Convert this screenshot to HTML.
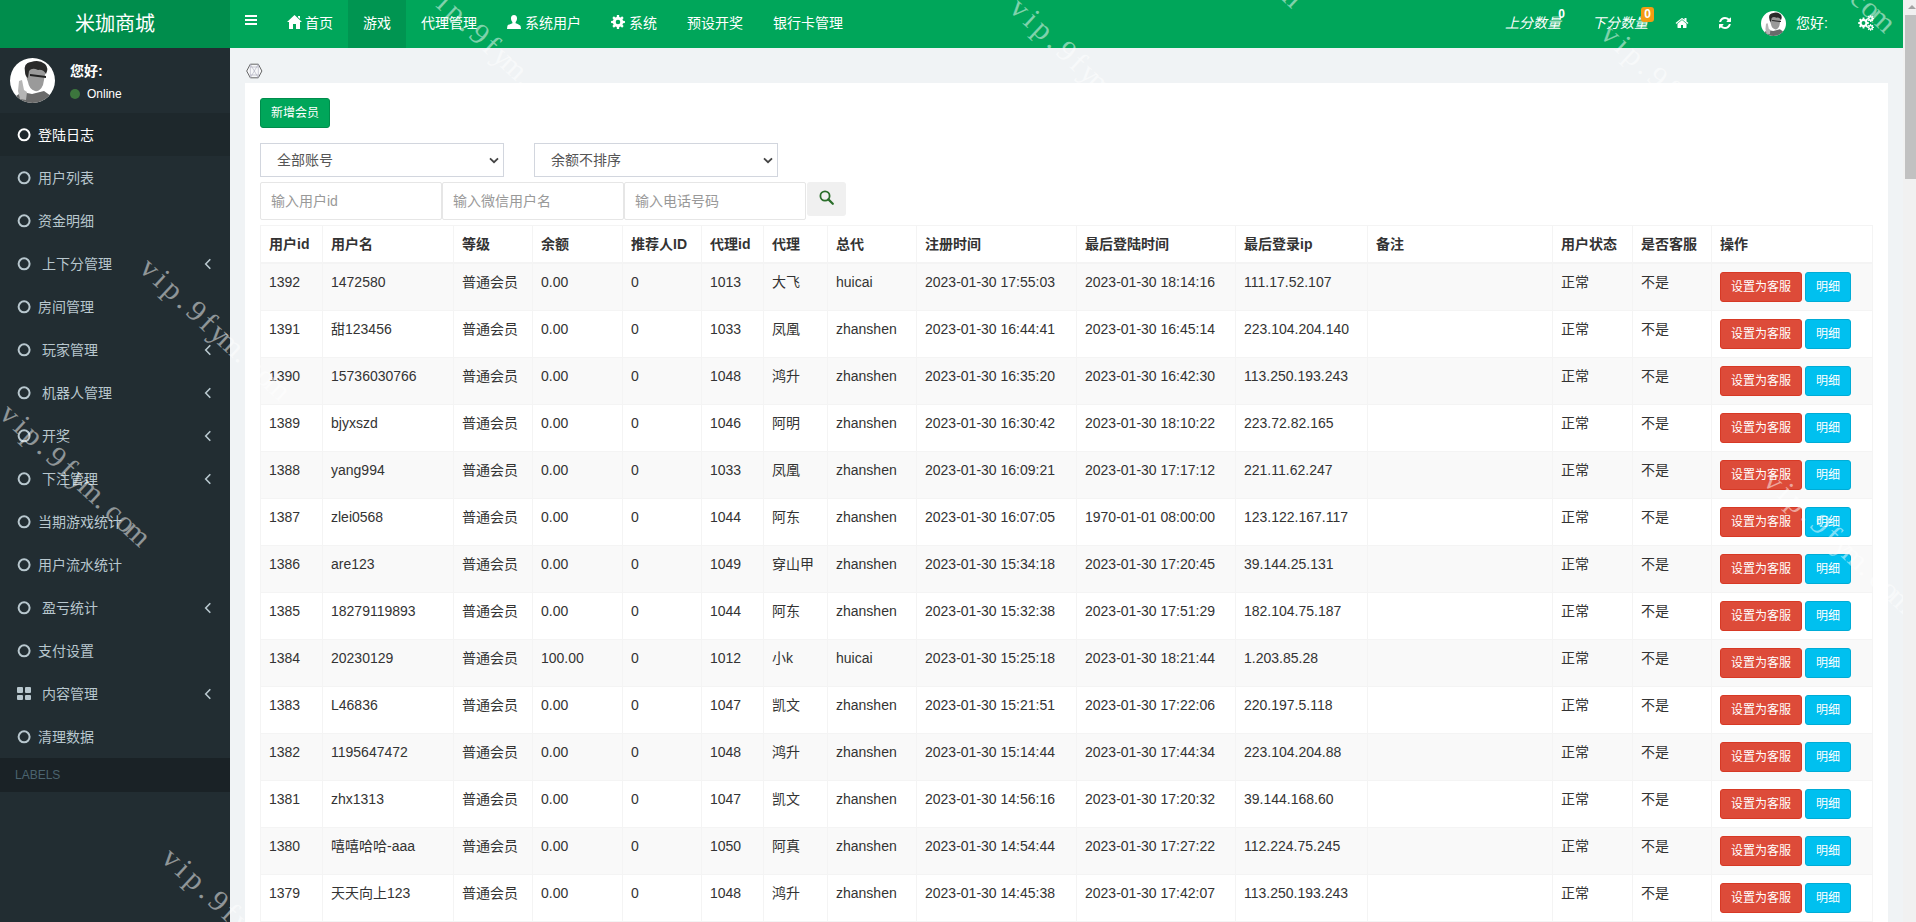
<!DOCTYPE html>
<html lang="zh-CN"><head><meta charset="utf-8"><title>米珈商城</title>
<style>
*{box-sizing:border-box}
html,body{margin:0;padding:0}
body{width:1916px;height:922px;overflow:hidden;position:relative;background:#f0f3f5;font-family:"Liberation Sans","Noto Sans CJK SC",sans-serif;font-size:14px;line-height:20px;color:#333}
ul{list-style:none;margin:0;padding:0}
#logo{position:absolute;left:0;top:0;width:230px;height:48px;background:#008d4c;color:#fff;font-size:20px;line-height:48px;text-align:center}
#nav{position:absolute;left:230px;top:0;width:1673px;height:48px;background:#00a65a;color:#fff}
#nav .tg{position:absolute;left:15px;top:15px;width:12px;height:10px;border-top:2px solid #fff;border-bottom:2px solid #fff}
#nav .tg:after{content:"";position:absolute;left:0;top:2px;width:12px;height:2px;background:#fff}
#nav .l{position:absolute;left:42px;top:0;height:48px;display:flex}
#nav .l li{height:48px;line-height:46px;padding:0 15px;white-space:nowrap;position:relative}
#nav .l li.on{background:#009551}
#nav .l li svg{vertical-align:-1px;margin-right:3px}
#nav .r{position:absolute;left:0;top:0;height:48px;width:100%}
.bdg{font-size:12px;font-weight:bold;line-height:11px;padding:2px 3px;border-radius:3px;width:13px;height:15px;text-align:center}
#nav .r > *{position:absolute}
#nav em{font-style:italic;line-height:46px;white-space:nowrap}
#side{position:absolute;left:0;top:48px;width:230px;height:874px;background:#222d32}
#side .AV{position:absolute;left:10px;top:10px;width:45px;height:45px}
#side .hi{position:absolute;left:70px;top:13px;color:#fff;font-weight:bold;font-size:14px;line-height:20px}
#side .on{position:absolute;left:70px;top:38px;color:#fff;font-size:12px;line-height:16px}
#side .on i{display:inline-block;width:10px;height:10px;border-radius:50%;background:#3c763d;margin-right:7px;vertical-align:-1px}
#menu{position:absolute;left:0;top:65px;width:230px}
#menu li{height:43px;line-height:44px;color:#b8c7ce;position:relative;padding-left:38px;white-space:nowrap}
#menu li.act{background:#1e282c;color:#fff}
#menu li .co{position:absolute;left:17px;top:15px;stroke:#b8c7ce}
#menu li.act .co{stroke:#fff}
#menu li .tv{margin-left:4px}
#menu li .ang{position:absolute;left:204px;top:16px}
#menu li .th{position:absolute;left:17px;top:15px;width:14px;height:13px}
#menu li .th b{position:absolute;width:6px;height:5.5px;background:#b8c7ce;border-radius:1px}
#menu li .th b:nth-child(2){left:8px}#menu li .th b:nth-child(3){top:7.5px}#menu li .th b:nth-child(4){left:8px;top:7.5px}
#lab{position:absolute;left:0;top:710px;width:230px;height:34px;background:#1a2226;color:#4b646f;font-size:12px;line-height:34px;padding-left:15px}
#box{position:absolute;left:245px;top:83px;width:1643px;height:860px;background:#fff}
.btn{display:inline-block;height:30px;line-height:28px;padding:0 10px;font-size:12px;color:#fff;border:1px solid;border-radius:3px;white-space:nowrap}
.bs{background:#00a65a;border-color:#008d4c;position:absolute;left:15px;top:15px}
.bd{background:#dd4b39;border-color:#d73925}
.bi{background:#00c0ef;border-color:#00acd6;margin-left:3px}
.sel{position:absolute;top:60px;width:244px;height:34px;border:1px solid #d2d6de;color:#555;line-height:32px;padding-left:16px}
.sel svg{position:absolute;left:227px;top:12px}
.inp{position:absolute;top:99px;width:182px;height:38px;border:1px solid #e6e6e6;border-radius:2px;color:#999;line-height:36px;padding-left:10px}
.sb{position:absolute;left:562px;top:99px;width:39px;height:34px;background:#f0f0f0;border-radius:3px}
.sb svg{position:absolute;left:12px;top:8px}
table{position:absolute;left:15px;top:142px;width:1612px;border-collapse:collapse;table-layout:fixed}
th,td{border:1px solid #f4f4f4;padding:8px;text-align:left;vertical-align:top;line-height:20px;white-space:nowrap;overflow:hidden}
th{font-weight:bold;height:37px;border-bottom:2px solid #f4f4f4}
td{height:47px}
tbody tr:nth-child(odd){background:#f9f9f9}
td.op{padding-top:8px;padding-bottom:0;font-size:0}
#sbar{position:absolute;left:1903px;top:0;width:13px;height:922px;background:#f1f1f1}
#sbar i{position:absolute;left:2px;top:15px;width:11px;height:164px;background:#c1c1c1}
#sbar:before{content:"";position:absolute;left:4.5px;top:5px;border:4px solid transparent;border-bottom:4px solid #a3a3a3;border-top:0}
.wm{position:absolute;overflow:visible;pointer-events:none}
.wm text{text-anchor:middle;font-family:"Liberation Serif",serif;font-size:30px;fill:#fff;fill-opacity:.5}
.hex{position:absolute;left:246px;top:63px}
</style></head><body>
<div id="logo">米珈商城</div>
<div id="nav"><span class="tg"></span>
<ul class="l">
<li><svg width="15" height="14" viewBox="0 0 15 14"><path d="M7.5 0 L15 7 L13 7 L13 14 L9 14 L9 9 L6 9 L6 14 L2 14 L2 7 L0 7Z M11 1 L13 1 L13 4 L11 2.2Z" fill="#fff"/></svg>首页</li>
<li class="on">游戏</li>
<li>代理管理</li>
<li><svg style="margin-right:4px" width="14" height="14" viewBox="0 0 14 14"><path d="M7 0 C9.2 0 10.2 1.7 10 3.8 C9.8 5.6 9 6.6 8.6 7.2 L8.6 8.2 C10.5 9 13 9.6 13.6 11 L14 14 L0 14 L0.4 11 C1 9.6 3.5 9 5.4 8.2 L5.4 7.2 C5 6.6 4.2 5.6 4 3.8 C3.8 1.7 4.8 0 7 0Z" fill="#fff"/></svg>系统用户</li>
<li><svg style="margin-right:4px" width="14" height="14" viewBox="0 0 14 14"><path fill-rule="evenodd" d="M13.91 5.90 L13.91 8.10 L12.04 8.26 L11.46 9.67 L12.66 11.11 L11.11 12.66 L9.67 11.46 L8.26 12.04 L8.10 13.91 L5.90 13.91 L5.74 12.04 L4.33 11.46 L2.89 12.66 L1.34 11.11 L2.54 9.67 L1.96 8.26 L0.09 8.10 L0.09 5.90 L1.96 5.74 L2.54 4.33 L1.34 2.89 L2.89 1.34 L4.33 2.54 L5.74 1.96 L5.90 0.09 L8.10 0.09 L8.26 1.96 L9.67 2.54 L11.11 1.34 L12.66 2.89 L11.46 4.33 L12.04 5.74Z M9.30 7.00 A2.3 2.3 0 1 0 4.70 7.00 A2.3 2.3 0 1 0 9.30 7.00Z" fill="#fff"/></svg>系统</li>
<li>预设开奖</li>
<li>银行卡管理</li>
</ul>
<div class="r">
<em style="left:1275px;top:0">上分数量</em><b class="bdg" style="left:1325px;top:7px">0</b>
<em style="left:1362px;top:0">下分数量</em><b class="bdg" style="left:1411px;top:7px;background:#f39c12">0</b>
<svg style="left:1445.3px;top:16px" width="14" height="14" viewBox="0 0 1792 1792"><path fill="#fff" d="M1472 992v480q0 26-19 45t-45 19h-384v-384h-256v384h-384q-26 0-45-19t-19-45v-480q0-1 .5-3t.5-3l575-474 575 474q1 2 1 6zm223-69l-62 74q-8 9-21 11h-3q-13 0-21-7l-692-577-692 577q-12 8-24 7-13-2-21-11l-62-74q-8-10-7-23.500t11-21.500l719-599q32-26 76-26t76 26l244 204v-195q0-14 9-23t23-9h192q14 0 23 9t9 23v408l219 182q10 8 11 21.500t-7 23.500z"/></svg>
<svg style="left:1488px;top:16px" width="14" height="14" viewBox="0 0 1792 1792"><path fill="#fff" d="M1639 1056q0 5-1 7-64 268-268 434.500t-478 166.500q-146 0-282.500-55t-243.500-157l-129 129q-19 19-45 19t-45-19-19-45v-448q0-26 19-45t45-19h448q26 0 45 19t19 45-19 45l-137 137q71 66 161 102t187 36q134 0 250-65t186-179q11-17 53-117 8-23 30-23h192q13 0 22.500 9.500t9.500 22.500zm25-800v448q0 26-19 45t-45 19h-448q-26 0-45-19t-19-45 19-45l138-138q-148-137-349-137-134 0-250 65t-186 179q-11 17-53 117-8 23-30 23h-199q-13 0-22.500-9.500t-9.500-22.500v-7q65-268 270-434.500t480-166.500q146 0 284 55.500t245 156.500l130-129q19-19 45-19t45 19 19 45z"/></svg>
<svg style="left:1531px;top:11px" width="25" height="25" viewBox="0 0 45 45"><defs><clipPath id="c2"><circle cx="22.5" cy="22.5" r="22.5"/></clipPath></defs><g clip-path="url(#c2)"><rect width="45" height="45" fill="#fff"/><path d="M3 40 L12 34 L22 36 L34 33 L41 38 L45 45 L0 45Z" fill="#6b6b6b"/><path d="M17 10 Q15 4 22 4 Q30 2 34 7 Q38 11 35 17 L33 27 Q30 34 25 33 Q19 31 18 24 Q15 17 17 10Z" fill="#9a9a9a"/><path d="M15 14 Q13 5 21 4 Q29 1 35 6 Q39 10 36 16 Q33 11 28 12 Q22 9 19 13 L18 20 Q15 18 15 14Z" fill="#2a2a2a"/><path d="M20 16 L36 18 L36 20 L20 18Z" fill="#222"/><path d="M9 23 L12 22 L14 32 L17 34 L16 42 L10 41 L8 33Z" fill="#b5b5b5"/></g></svg>
<span style="left:1566px;top:0;line-height:46px;white-space:nowrap">您好:</span>
<svg style="left:1627.5px;top:15px" width="16" height="16" viewBox="0 0 16 16"><path fill-rule="evenodd" fill="#fff" d="M10.93 7.14 L10.93 8.86 L9.48 9.00 L9.02 10.11 L9.95 11.23 L8.73 12.45 L7.61 11.52 L6.50 11.98 L6.36 13.43 L4.64 13.43 L4.50 11.98 L3.39 11.52 L2.27 12.45 L1.05 11.23 L1.98 10.11 L1.52 9.00 L0.07 8.86 L0.07 7.14 L1.52 7.00 L1.98 5.89 L1.05 4.77 L2.27 3.55 L3.39 4.48 L4.50 4.02 L4.64 2.57 L6.36 2.57 L6.50 4.02 L7.61 4.48 L8.73 3.55 L9.95 4.77 L9.02 5.89 L9.48 7.00Z M7.40 8.00 A1.9 1.9 0 1 0 3.60 8.00 A1.9 1.9 0 1 0 7.40 8.00Z M15.96 3.07 L15.96 4.13 L15.03 4.21 L14.74 4.89 L15.35 5.60 L14.60 6.35 L13.89 5.74 L13.21 6.03 L13.13 6.96 L12.07 6.96 L11.99 6.03 L11.31 5.74 L10.60 6.35 L9.85 5.60 L10.46 4.89 L10.17 4.21 L9.24 4.13 L9.24 3.07 L10.17 2.99 L10.46 2.31 L9.85 1.60 L10.60 0.85 L11.31 1.46 L11.99 1.17 L12.07 0.24 L13.13 0.24 L13.21 1.17 L13.89 1.46 L14.60 0.85 L15.35 1.60 L14.74 2.31 L15.03 2.99Z M13.70 3.60 A1.1 1.1 0 1 0 11.50 3.60 A1.1 1.1 0 1 0 13.70 3.60Z M15.96 11.87 L15.96 12.93 L15.03 13.01 L14.74 13.69 L15.35 14.40 L14.60 15.15 L13.89 14.54 L13.21 14.83 L13.13 15.76 L12.07 15.76 L11.99 14.83 L11.31 14.54 L10.60 15.15 L9.85 14.40 L10.46 13.69 L10.17 13.01 L9.24 12.93 L9.24 11.87 L10.17 11.79 L10.46 11.11 L9.85 10.40 L10.60 9.65 L11.31 10.26 L11.99 9.97 L12.07 9.04 L13.13 9.04 L13.21 9.97 L13.89 10.26 L14.60 9.65 L15.35 10.40 L14.74 11.11 L15.03 11.79Z M13.70 12.40 A1.1 1.1 0 1 0 11.50 12.40 A1.1 1.1 0 1 0 13.70 12.40Z"/></svg>
</div>
</div>
<div id="side">
<svg class="AV" viewBox="0 0 45 45"><defs><clipPath id="c1"><circle cx="22.5" cy="22.5" r="22.5"/></clipPath></defs><g clip-path="url(#c1)"><rect width="45" height="45" fill="#fff"/><path d="M3 40 L12 34 L22 36 L34 33 L41 38 L45 45 L0 45Z" fill="#6b6b6b"/><path d="M17 10 Q15 4 22 4 Q30 2 34 7 Q38 11 35 17 L33 27 Q30 34 25 33 Q19 31 18 24 Q15 17 17 10Z" fill="#9a9a9a"/><path d="M15 14 Q13 5 21 4 Q29 1 35 6 Q39 10 36 16 Q33 11 28 12 Q22 9 19 13 L18 20 Q15 18 15 14Z" fill="#2a2a2a"/><path d="M20 16 L36 18 L36 20 L20 18Z" fill="#222"/><path d="M9 23 L12 22 L14 32 L17 34 L16 42 L10 41 L8 33Z" fill="#b5b5b5"/></g></svg>
<div class="hi">您好:</div>
<div class="on"><i></i>Online</div>
<ul id="menu">
<li class="act"><svg class="co" width="14" height="14"><circle cx="7.1" cy="6.85" r="5.5" fill="none" stroke-width="2"/></svg><span>登陆日志</span></li>
<li><svg class="co" width="14" height="14"><circle cx="7.1" cy="6.85" r="5.5" fill="none" stroke-width="2"/></svg><span>用户列表</span></li>
<li><svg class="co" width="14" height="14"><circle cx="7.1" cy="6.85" r="5.5" fill="none" stroke-width="2"/></svg><span>资金明细</span></li>
<li><svg class="co" width="14" height="14"><circle cx="7.1" cy="6.85" r="5.5" fill="none" stroke-width="2"/></svg><span class="tv">上下分管理</span><svg class="ang" width="8" height="12" viewBox="0 0 8 12"><path d="M6.3 1.2 L1.7 6 L6.3 10.8" fill="none" stroke="#b8c7ce" stroke-width="1.6"/></svg></li>
<li><svg class="co" width="14" height="14"><circle cx="7.1" cy="6.85" r="5.5" fill="none" stroke-width="2"/></svg><span>房间管理</span></li>
<li><svg class="co" width="14" height="14"><circle cx="7.1" cy="6.85" r="5.5" fill="none" stroke-width="2"/></svg><span class="tv">玩家管理</span><svg class="ang" width="8" height="12" viewBox="0 0 8 12"><path d="M6.3 1.2 L1.7 6 L6.3 10.8" fill="none" stroke="#b8c7ce" stroke-width="1.6"/></svg></li>
<li><svg class="co" width="14" height="14"><circle cx="7.1" cy="6.85" r="5.5" fill="none" stroke-width="2"/></svg><span class="tv">机器人管理</span><svg class="ang" width="8" height="12" viewBox="0 0 8 12"><path d="M6.3 1.2 L1.7 6 L6.3 10.8" fill="none" stroke="#b8c7ce" stroke-width="1.6"/></svg></li>
<li><svg class="co" width="14" height="14"><circle cx="7.1" cy="6.85" r="5.5" fill="none" stroke-width="2"/></svg><span class="tv">开奖</span><svg class="ang" width="8" height="12" viewBox="0 0 8 12"><path d="M6.3 1.2 L1.7 6 L6.3 10.8" fill="none" stroke="#b8c7ce" stroke-width="1.6"/></svg></li>
<li><svg class="co" width="14" height="14"><circle cx="7.1" cy="6.85" r="5.5" fill="none" stroke-width="2"/></svg><span class="tv">下注管理</span><svg class="ang" width="8" height="12" viewBox="0 0 8 12"><path d="M6.3 1.2 L1.7 6 L6.3 10.8" fill="none" stroke="#b8c7ce" stroke-width="1.6"/></svg></li>
<li><svg class="co" width="14" height="14"><circle cx="7.1" cy="6.85" r="5.5" fill="none" stroke-width="2"/></svg><span>当期游戏统计</span></li>
<li><svg class="co" width="14" height="14"><circle cx="7.1" cy="6.85" r="5.5" fill="none" stroke-width="2"/></svg><span>用户流水统计</span></li>
<li><svg class="co" width="14" height="14"><circle cx="7.1" cy="6.85" r="5.5" fill="none" stroke-width="2"/></svg><span class="tv">盈亏统计</span><svg class="ang" width="8" height="12" viewBox="0 0 8 12"><path d="M6.3 1.2 L1.7 6 L6.3 10.8" fill="none" stroke="#b8c7ce" stroke-width="1.6"/></svg></li>
<li><svg class="co" width="14" height="14"><circle cx="7.1" cy="6.85" r="5.5" fill="none" stroke-width="2"/></svg><span>支付设置</span></li>
<li><i class="th"><b></b><b></b><b></b><b></b></i><span class="tv">内容管理</span><svg class="ang" width="8" height="12" viewBox="0 0 8 12"><path d="M6.3 1.2 L1.7 6 L6.3 10.8" fill="none" stroke="#b8c7ce" stroke-width="1.6"/></svg></li>
<li><svg class="co" width="14" height="14"><circle cx="7.1" cy="6.85" r="5.5" fill="none" stroke-width="2"/></svg><span>清理数据</span></li>
</ul>
<div id="lab">LABELS</div>
</div>
<svg class="hex" width="17" height="16" viewBox="0 0 17 16"><path d="M0.7 8 L4.3 1.2 L12.3 1.2 L15.9 8 L12.3 14.8 L4.3 14.8Z" fill="#f7f8fa" stroke="#666" stroke-width="1"/><path d="M4.3 1.2 L4.3 14.8 M12.3 1.2 L12.3 14.8 M4.3 1.2 L12.3 14.8 M12.3 1.2 L4.3 14.8 M4.3 4 L12.3 4 M4.3 12 L12.3 12" fill="none" stroke="#aab" stroke-width=".6"/></svg>
<div id="box">
<span class="btn bs">新增会员</span>
<div class="sel" style="left:15px">全部账号<svg width="12" height="8" viewBox="0 0 12 8"><path d="M2 2.3 L6 6.2 L10 2.3" fill="none" stroke="#444" stroke-width="1.8"/></svg></div>
<div class="sel" style="left:289px">余额不排序<svg width="12" height="8" viewBox="0 0 12 8"><path d="M2 2.3 L6 6.2 L10 2.3" fill="none" stroke="#444" stroke-width="1.8"/></svg></div>
<div class="inp" style="left:15px">输入用户id</div>
<div class="inp" style="left:197px">输入微信用户名</div>
<div class="inp" style="left:379px">输入电话号码</div>
<div class="sb"><svg width="15" height="15" viewBox="0 0 15 15"><circle cx="6" cy="6" r="4.6" fill="none" stroke="#2a6e2a" stroke-width="1.8"/><path d="M9.4 9.4 L13.8 13.8" stroke="#2a6e2a" stroke-width="2.2" stroke-linecap="round"/></svg></div>
<table>
<colgroup><col style="width:62px"><col style="width:131px"><col style="width:79px"><col style="width:90px"><col style="width:79px"><col style="width:62px"><col style="width:64px"><col style="width:89px"><col style="width:160px"><col style="width:159px"><col style="width:132px"><col style="width:185px"><col style="width:80px"><col style="width:79px"><col style="width:161px"></colgroup>
<thead><tr><th>用户id</th><th>用户名</th><th>等级</th><th>余额</th><th>推荐人ID</th><th>代理id</th><th>代理</th><th>总代</th><th>注册时间</th><th>最后登陆时间</th><th>最后登录ip</th><th>备注</th><th>用户状态</th><th>是否客服</th><th>操作</th></tr></thead>
<tbody>
<tr><td>1392</td><td>1472580</td><td>普通会员</td><td>0.00</td><td>0</td><td>1013</td><td>大飞</td><td>huicai</td><td>2023-01-30 17:55:03</td><td>2023-01-30 18:14:16</td><td>111.17.52.107</td><td></td><td>正常</td><td>不是</td><td class="op"><span class="btn bd">设置为客服</span><span class="btn bi">明细</span></td></tr>
<tr><td>1391</td><td>甜123456</td><td>普通会员</td><td>0.00</td><td>0</td><td>1033</td><td>凤凰</td><td>zhanshen</td><td>2023-01-30 16:44:41</td><td>2023-01-30 16:45:14</td><td>223.104.204.140</td><td></td><td>正常</td><td>不是</td><td class="op"><span class="btn bd">设置为客服</span><span class="btn bi">明细</span></td></tr>
<tr><td>1390</td><td>15736030766</td><td>普通会员</td><td>0.00</td><td>0</td><td>1048</td><td>鸿升</td><td>zhanshen</td><td>2023-01-30 16:35:20</td><td>2023-01-30 16:42:30</td><td>113.250.193.243</td><td></td><td>正常</td><td>不是</td><td class="op"><span class="btn bd">设置为客服</span><span class="btn bi">明细</span></td></tr>
<tr><td>1389</td><td>bjyxszd</td><td>普通会员</td><td>0.00</td><td>0</td><td>1046</td><td>阿明</td><td>zhanshen</td><td>2023-01-30 16:30:42</td><td>2023-01-30 18:10:22</td><td>223.72.82.165</td><td></td><td>正常</td><td>不是</td><td class="op"><span class="btn bd">设置为客服</span><span class="btn bi">明细</span></td></tr>
<tr><td>1388</td><td>yang994</td><td>普通会员</td><td>0.00</td><td>0</td><td>1033</td><td>凤凰</td><td>zhanshen</td><td>2023-01-30 16:09:21</td><td>2023-01-30 17:17:12</td><td>221.11.62.247</td><td></td><td>正常</td><td>不是</td><td class="op"><span class="btn bd">设置为客服</span><span class="btn bi">明细</span></td></tr>
<tr><td>1387</td><td>zlei0568</td><td>普通会员</td><td>0.00</td><td>0</td><td>1044</td><td>阿东</td><td>zhanshen</td><td>2023-01-30 16:07:05</td><td>1970-01-01 08:00:00</td><td>123.122.167.117</td><td></td><td>正常</td><td>不是</td><td class="op"><span class="btn bd">设置为客服</span><span class="btn bi">明细</span></td></tr>
<tr><td>1386</td><td>are123</td><td>普通会员</td><td>0.00</td><td>0</td><td>1049</td><td>穿山甲</td><td>zhanshen</td><td>2023-01-30 15:34:18</td><td>2023-01-30 17:20:45</td><td>39.144.25.131</td><td></td><td>正常</td><td>不是</td><td class="op"><span class="btn bd">设置为客服</span><span class="btn bi">明细</span></td></tr>
<tr><td>1385</td><td>18279119893</td><td>普通会员</td><td>0.00</td><td>0</td><td>1044</td><td>阿东</td><td>zhanshen</td><td>2023-01-30 15:32:38</td><td>2023-01-30 17:51:29</td><td>182.104.75.187</td><td></td><td>正常</td><td>不是</td><td class="op"><span class="btn bd">设置为客服</span><span class="btn bi">明细</span></td></tr>
<tr><td>1384</td><td>20230129</td><td>普通会员</td><td>100.00</td><td>0</td><td>1012</td><td>小k</td><td>huicai</td><td>2023-01-30 15:25:18</td><td>2023-01-30 18:21:44</td><td>1.203.85.28</td><td></td><td>正常</td><td>不是</td><td class="op"><span class="btn bd">设置为客服</span><span class="btn bi">明细</span></td></tr>
<tr><td>1383</td><td>L46836</td><td>普通会员</td><td>0.00</td><td>0</td><td>1047</td><td>凯文</td><td>zhanshen</td><td>2023-01-30 15:21:51</td><td>2023-01-30 17:22:06</td><td>220.197.5.118</td><td></td><td>正常</td><td>不是</td><td class="op"><span class="btn bd">设置为客服</span><span class="btn bi">明细</span></td></tr>
<tr><td>1382</td><td>1195647472</td><td>普通会员</td><td>0.00</td><td>0</td><td>1048</td><td>鸿升</td><td>zhanshen</td><td>2023-01-30 15:14:44</td><td>2023-01-30 17:44:34</td><td>223.104.204.88</td><td></td><td>正常</td><td>不是</td><td class="op"><span class="btn bd">设置为客服</span><span class="btn bi">明细</span></td></tr>
<tr><td>1381</td><td>zhx1313</td><td>普通会员</td><td>0.00</td><td>0</td><td>1047</td><td>凯文</td><td>zhanshen</td><td>2023-01-30 14:56:16</td><td>2023-01-30 17:20:32</td><td>39.144.168.60</td><td></td><td>正常</td><td>不是</td><td class="op"><span class="btn bd">设置为客服</span><span class="btn bi">明细</span></td></tr>
<tr><td>1380</td><td>嘻嘻哈哈-aaa</td><td>普通会员</td><td>0.00</td><td>0</td><td>1050</td><td>阿真</td><td>zhanshen</td><td>2023-01-30 14:54:44</td><td>2023-01-30 17:27:22</td><td>112.224.75.245</td><td></td><td>正常</td><td>不是</td><td class="op"><span class="btn bd">设置为客服</span><span class="btn bi">明细</span></td></tr>
<tr><td>1379</td><td>天天向上123</td><td>普通会员</td><td>0.00</td><td>0</td><td>1048</td><td>鸿升</td><td>zhanshen</td><td>2023-01-30 14:45:38</td><td>2023-01-30 17:42:07</td><td>113.250.193.243</td><td></td><td>正常</td><td>不是</td><td class="op"><span class="btn bd">设置为客服</span><span class="btn bi">明细</span></td></tr>
</tbody></table>
</div>
<svg class="wm" style="left:138px;top:270px" width="1" height="1"><text transform="rotate(43)" x="7.5 23.4 39.3 55.2 71.1 87.0 102.9 118.8 134.7 150.6 166.5 182.4" y="0">vip.9fym.com</text></svg>
<svg class="wm" style="left:-2px;top:416px" width="1" height="1"><text transform="rotate(43)" x="7.5 23.4 39.3 55.2 71.1 87.0 102.9 118.8 134.7 150.6 166.5 182.4" y="0">vip.9fym.com</text></svg>
<svg class="wm" style="left:160px;top:860px" width="1" height="1"><text transform="rotate(43)" x="7.5 23.4 39.3 55.2 71.1 87.0 102.9 118.8 134.7 150.6 166.5 182.4" y="0">vip.9fym.com</text></svg>
<svg class="wm" style="left:421px;top:-7px" width="1" height="1"><text transform="rotate(43)" x="7.5 23.4 39.3 55.2 71.1 87.0 102.9 118.8 134.7 150.6 166.5 182.4" y="0">vip.9fym.com</text></svg>
<svg class="wm" style="left:1008px;top:10px" width="1" height="1"><text transform="rotate(43)" x="7.5 23.4 39.3 55.2 71.1 87.0 102.9 118.8 134.7 150.6 166.5 182.4" y="0">vip.9fym.com</text></svg>
<svg class="wm" style="left:1150px;top:-123px" width="1" height="1"><text transform="rotate(43)" x="7.5 23.4 39.3 55.2 71.1 87.0 102.9 118.8 134.7 150.6 166.5 182.4" y="0">vip.9fym.com</text></svg>
<svg class="wm" style="left:1599px;top:36px" width="1" height="1"><text transform="rotate(43)" x="7.5 23.4 39.3 55.2 71.1 87.0 102.9 118.8 134.7 150.6 166.5 182.4" y="0">vip.9fym.com</text></svg>
<svg class="wm" style="left:1743px;top:-98px" width="1" height="1"><text transform="rotate(43)" x="7.5 23.4 39.3 55.2 71.1 87.0 102.9 118.8 134.7 150.6 166.5 182.4" y="0">vip.9fym.com</text></svg>
<svg class="wm" style="left:1762px;top:483px" width="1" height="1"><text transform="rotate(43)" x="7.5 23.4 39.3 55.2 71.1 87.0 102.9 118.8 134.7 150.6 166.5 182.4" y="0">vip.9fym.com</text></svg>
<div id="sbar"><i></i></div>
</body></html>
